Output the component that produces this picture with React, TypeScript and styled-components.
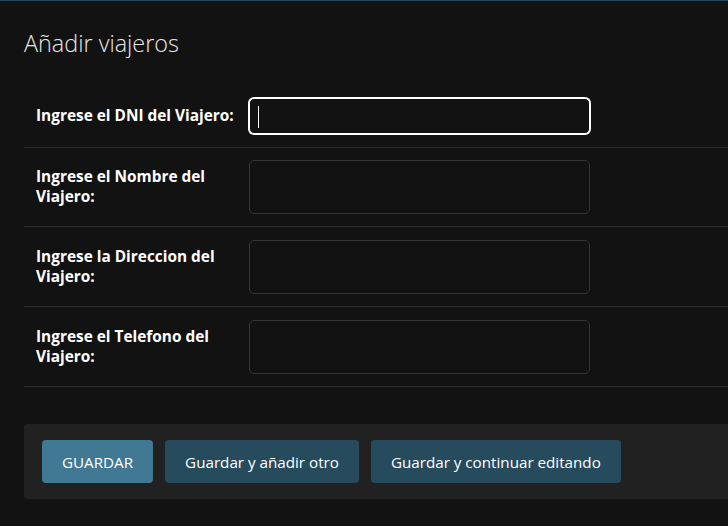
import React from "react";
import styled, { createGlobalStyle } from "styled-components";

const Global = createGlobalStyle`
  html, body { margin: 0; padding: 0; background: #121212; }
  body { font-family: "Open Sans", "Noto Sans", sans-serif; color: #eeeeee; }
  * { box-sizing: border-box; }
`;

const Page = styled.div`
  border-top: 1px solid #264b5d;
  min-height: 526px;
  padding: 0 0 0 24px;
  overflow: hidden;
`;

const Title = styled.h1`
  margin: 28px 0 27px 0;
  font-family: "Open Sans", sans-serif;
  font-weight: 300;
  font-size: 23.4px;
  line-height: 29px;
  color: #e8e8e8;
`;

const Fieldset = styled.div`
  display: flex;
  flex-direction: column;
`;

const Row = styled.div<{ $padTop: number }>`
  display: flex;
  align-items: center;
  gap: 13px;
  padding: ${(p) => p.$padTop}px 12px 12px 12px;
  border-bottom: 1px solid #2b2b2b;
`;

const Label = styled.label`
  width: 200px;
  flex: none;
  font-family: "Open Sans", sans-serif;
  font-weight: 700;
  font-size: 15.4px;
  line-height: 20px;
  color: #ffffff;
  white-space: normal;
`;

const Field = styled.div<{ $focused?: boolean; $h: number }>`
  position: relative;
  width: 341px;
  height: ${(p) => p.$h}px;
  border-radius: 5px;
  border: 1px solid ${(p) => (p.$focused ? "#ffffff" : "#353535")};
  box-shadow: ${(p) => (p.$focused ? "0 0 0 1px #ffffff" : "none")};
  background: #121212;
  margin: ${(p) => (p.$focused ? "1px 0" : "0")};
`;

const Caret = styled.span`
  position: absolute;
  left: 8px;
  top: 7px;
  width: 1px;
  height: 22px;
  background: #ffffff;
`;

const SubmitRow = styled.div`
  margin-top: 37px;
  display: flex;
  gap: 12px;
  padding: 16px 18px;
  background: #212121;
  border-radius: 4px 0 0 4px;
`;

const Button = styled.button<{ $primary?: boolean }>`
  height: 43px;
  padding: 0 20px;
  border: none;
  border-radius: 4px;
  background: ${(p) => (p.$primary ? "#417893" : "#264b5d")};
  color: #ffffff;
  font-family: "Open Sans", sans-serif;
  font-size: 15.2px;
  font-weight: 400;
  white-space: nowrap;
  cursor: pointer;
`;

const fields = [
  { label: "Ingrese el DNI del Viajero:", h: 36, focused: true, pad: 12 },
  { label: "Ingrese el Nombre del Viajero:", h: 54, pad: 12 },
  { label: "Ingrese la Direccion del Viajero:", h: 54, pad: 13 },
  { label: "Ingrese el Telefono del Viajero:", h: 54, pad: 13 },
];

export default function App() {
  return (
    <>
      <Global />
      <Page>
        <Title>Añadir viajeros</Title>
        <Fieldset>
          {fields.map((f, i) => (
            <Row key={i} $padTop={f.pad}>
              <Label>{f.label}</Label>
              <Field $h={f.h} $focused={f.focused}>
                {f.focused && <Caret />}
              </Field>
            </Row>
          ))}
        </Fieldset>
        <SubmitRow>
          <Button $primary>GUARDAR</Button>
          <Button>Guardar y añadir otro</Button>
          <Button>Guardar y continuar editando</Button>
        </SubmitRow>
      </Page>
    </>
  );
}
